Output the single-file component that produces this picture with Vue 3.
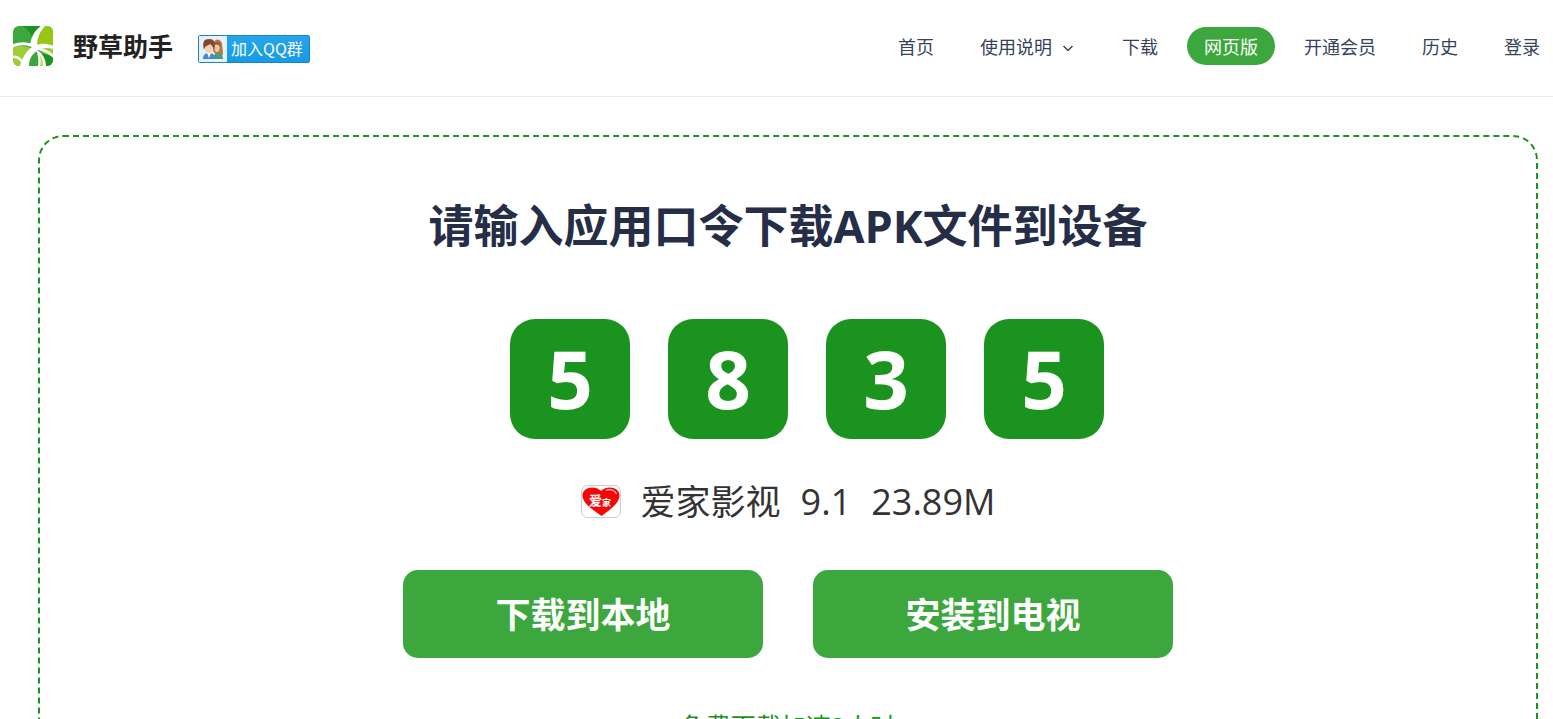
<script setup>
import { ref } from 'vue'

const links = [
  { label: '首页' },
  { label: '使用说明', menu: true },
  { label: '下载' },
  { label: '网页版', active: true },
  { label: '开通会员' },
  { label: '历史' },
  { label: '登录' },
]

const code = ref(['5', '8', '3', '5'])
</script>

<template>
  <div class="page">
    <header class="header">
      <a class="brand" href="#">
        <svg class="logo" viewBox="0 0 40 40" aria-hidden="true">
          <defs>
            <clipPath id="logo-clip"><rect width="40" height="40" rx="6" /></clipPath>
          </defs>
          <g clip-path="url(#logo-clip)">
            <rect width="40" height="40" fill="#3ca73d" />
            <path d="M10 0H32C26 5 22 9 20 13C18 8 15 3 10 0Z" fill="#1a941f" />
            <path d="M31 0H40V20H22C23 12 26 5 31 0Z" fill="#98c615" />
            <path d="M0 21C7 19 14 20 20 23L9 40H0Z" fill="#a0cc38" />
            <path d="M26 22C31 19 36 20 40 22V31L31 29Z" fill="#a0cc38" />
            <path d="M29 27C33 28 37 29 40 31V40H29Z" fill="#1a941f" />
            <path d="M33 -1C27 5 24 12 24 20H17C18 11 21 5 29 -1Z" fill="#fff" />
            <path d="M-1 20C9 16 18 18 25 23" fill="none" stroke="#fff" stroke-width="3" />
            <path d="M-1 31C5 30 8 33 10 38" fill="none" stroke="#fff" stroke-width="2.500" />
            <path d="M7 40C10 29 17 19 27 18C33 17 38 19 41 20V23C34 21 28 22 24 25C18 29 16 34 16 40Z" fill="#fff" />
            <path d="M26 23C33 24 37 27 41 31" fill="none" stroke="#fff" stroke-width="2.500" />
            <path d="M23 24C29 26 33 33 33 40H25C26 34 25 28 23 24Z" fill="#fff" />
            <path d="M26 28C29 31 30 35 30 40H27C28 35 28 31 26 28Z" fill="#b9da6a" />
          </g>
        </svg>
        <span class="name">野草助手</span>
      </a>
      <a class="qq" href="#">
        <svg class="people" viewBox="0 0 28 26" aria-hidden="true">
          <rect width="28" height="26" fill="#e6f1fb" />
          <path d="M15 6C17 2 22 3 23 8L24 17C24 20 21 21 18 20L14 15Z" fill="#b57743" />
          <ellipse cx="18" cy="12" rx="2.500" ry="4" fill="#f1c5a4" />
          <path d="M14 9C16 4 21 5 22 10C19 9 17 8 14 9Z" fill="#9b5b2c" />
          <path d="M14 23C14 18 17 17 20 17C23 18 24 20 24 23Z" fill="#4b9b78" />
          <path d="M4 23C4 18 7 17 10 17C14 17 16 19 16 23Z" fill="#4689cd" />
          <path d="M8 17L10 22L12 17Z" fill="#fff" />
          <ellipse cx="10" cy="12" rx="4" ry="5" fill="#f4cfb2" />
          <path d="M5 14C3 6 5 3 10 3C15 3 17 6 15 14C14 11 13 9 11 8C9 10 6 9 5 14Z" fill="#80482f" />
        </svg>
        <span class="qq-text">加入QQ群</span>
      </a>
      <nav class="nav">
        <a
          v-for="link in links"
          :key="link.label"
          href="#"
          class="link"
          :class="{ active: link.active }"
        >
          {{ link.label }}
          <svg v-if="link.menu" class="chevron" viewBox="0 0 16 16" aria-hidden="true">
            <path d="M3.500 7L8 11.500L12.500 7" fill="none" stroke="currentColor" stroke-width="1.500" />
          </svg>
        </a>
      </nav>
    </header>

    <main class="panel">
      <h1 class="title">请输入应用口令下载APK文件到设备</h1>
      <div class="code">
        <input
          v-for="(digit, i) in code"
          :key="i"
          v-model="code[i]"
          class="digit"
          type="text"
          inputmode="numeric"
          maxlength="1"
          :aria-label="`口令第${i + 1}位`"
        />
      </div>
      <div class="app-info">
        <svg class="app-icon" viewBox="0 0 40 33" aria-hidden="true">
          <rect x="0.500" y="0.500" width="39" height="32" rx="6" fill="#fff" stroke="#ccc" />
          <path d="M20.500 31C14 26 2 19 1.500 11C1 2 14 0 20 6C26 0 39 2 38.500 11C38 19 27 26 20.500 31Z" fill="#f80505" />
          <path d="M25 5.500C29 3.500 34 5 35.500 9" fill="none" stroke="#fff" stroke-width="1.200" opacity="0.800" />
          <text class="icon-text" x="8" y="20" font-size="13">爱</text>
          <text class="icon-text" x="21" y="21" font-size="9">家</text>
        </svg>
        <span class="app-name">爱家影视</span>
        <span class="figure">9.1</span>
        <span class="figure">23.89M</span>
      </div>
      <div class="actions">
        <button class="action" type="button">下载到本地</button>
        <button class="action" type="button">安装到电视</button>
      </div>
      <a class="hint" href="#">免费下载加速2小时</a>
    </main>
  </div>
</template>

<style>
body {
  margin: 0;
  background: #fff;
}
</style>

<style scoped>
.page {
  height: 100vh;
  overflow: hidden;
  font-family: "Open Sans", "Noto Sans CJK SC", sans-serif;
}

.page a {
  text-decoration: none;
}

.header {
  display: flex;
  align-items: center;
  height: 96px;
  padding: 0 13px;
  border-bottom: 1px solid #e9e9e9;
}

.brand {
  display: flex;
  align-items: center;
  gap: 20px;
  padding-bottom: 4px;
  color: #222;
}

.logo {
  width: 40px;
  height: 40px;
}

.name {
  font-size: 25px;
  font-weight: 700;
  line-height: 40px;
}

.qq {
  display: flex;
  align-items: center;
  box-sizing: border-box;
  width: 112px;
  height: 28px;
  margin-top: 2px;
  margin-left: 25px;
  border: 1px solid #1c83c4;
  border-radius: 2px;
  background: linear-gradient(#27a5eb, #159be6);
  color: #fff;
}

.people {
  flex: none;
  width: 28px;
  height: 26px;
}

.qq-text {
  margin-left: 4px;
  padding-bottom: 2px;
  font-family: "Noto Sans CJK SC", sans-serif;
  font-size: 16px;
  line-height: 24px;
  white-space: nowrap;
}

.nav {
  display: flex;
  gap: 12px;
  margin-left: auto;
  margin-bottom: 4px;
}

.link {
  display: flex;
  align-items: center;
  box-sizing: border-box;
  height: 38px;
  padding: 2px 17px 0;
  border-radius: 19px;
  color: #36425c;
  font-size: 18px;
  line-height: 36px;
  white-space: nowrap;
}

.link:last-child {
  padding-right: 0;
}

.link.active {
  background: #3ca73d;
  color: #fff;
}

.chevron {
  width: 16px;
  height: 16px;
  margin-left: 8px;
}

.panel {
  display: flex;
  flex-direction: column;
  align-items: center;
  margin: 38px 15px 38px 38px;
  padding: 59px 0 60px;
  border: 2px dashed #1a941f;
  border-radius: 25px;
}

.title {
  margin: 0;
  color: #252d47;
  font-size: 45px;
  font-weight: 700;
  line-height: 60px;
}

.code {
  display: flex;
  gap: 38px;
  margin-top: 63px;
  padding-left: 38px;
}

.digit {
  box-sizing: border-box;
  width: 120px;
  height: 120px;
  padding: 0 0 4px;
  border: 0;
  border-radius: 25px;
  background: #1a941f;
  color: #fff;
  font-family: inherit;
  font-size: 80px;
  font-weight: 700;
  text-align: center;
}

.app-info {
  display: flex;
  align-items: center;
  gap: 20px;
  margin-top: 38px;
  color: #333;
  font-size: 36px;
  line-height: 50px;
}

.app-icon {
  width: 40px;
  height: 33px;
  margin-bottom: 2px;
}

.app-name {
  font-size: 35px;
}

.icon-text {
  fill: #fff;
  font-weight: 700;
}

.actions {
  display: flex;
  gap: 50px;
  margin-top: 43px;
}

.action {
  width: 360px;
  height: 88px;
  padding: 0 0 4px;
  border: 0;
  border-radius: 15px;
  background: #3ca73d;
  color: #fff;
  font-family: inherit;
  font-size: 35px;
  font-weight: 700;
}

.hint {
  margin-top: 50px;
  color: #1a941f;
  font-size: 25px;
  line-height: 36px;
}
</style>
